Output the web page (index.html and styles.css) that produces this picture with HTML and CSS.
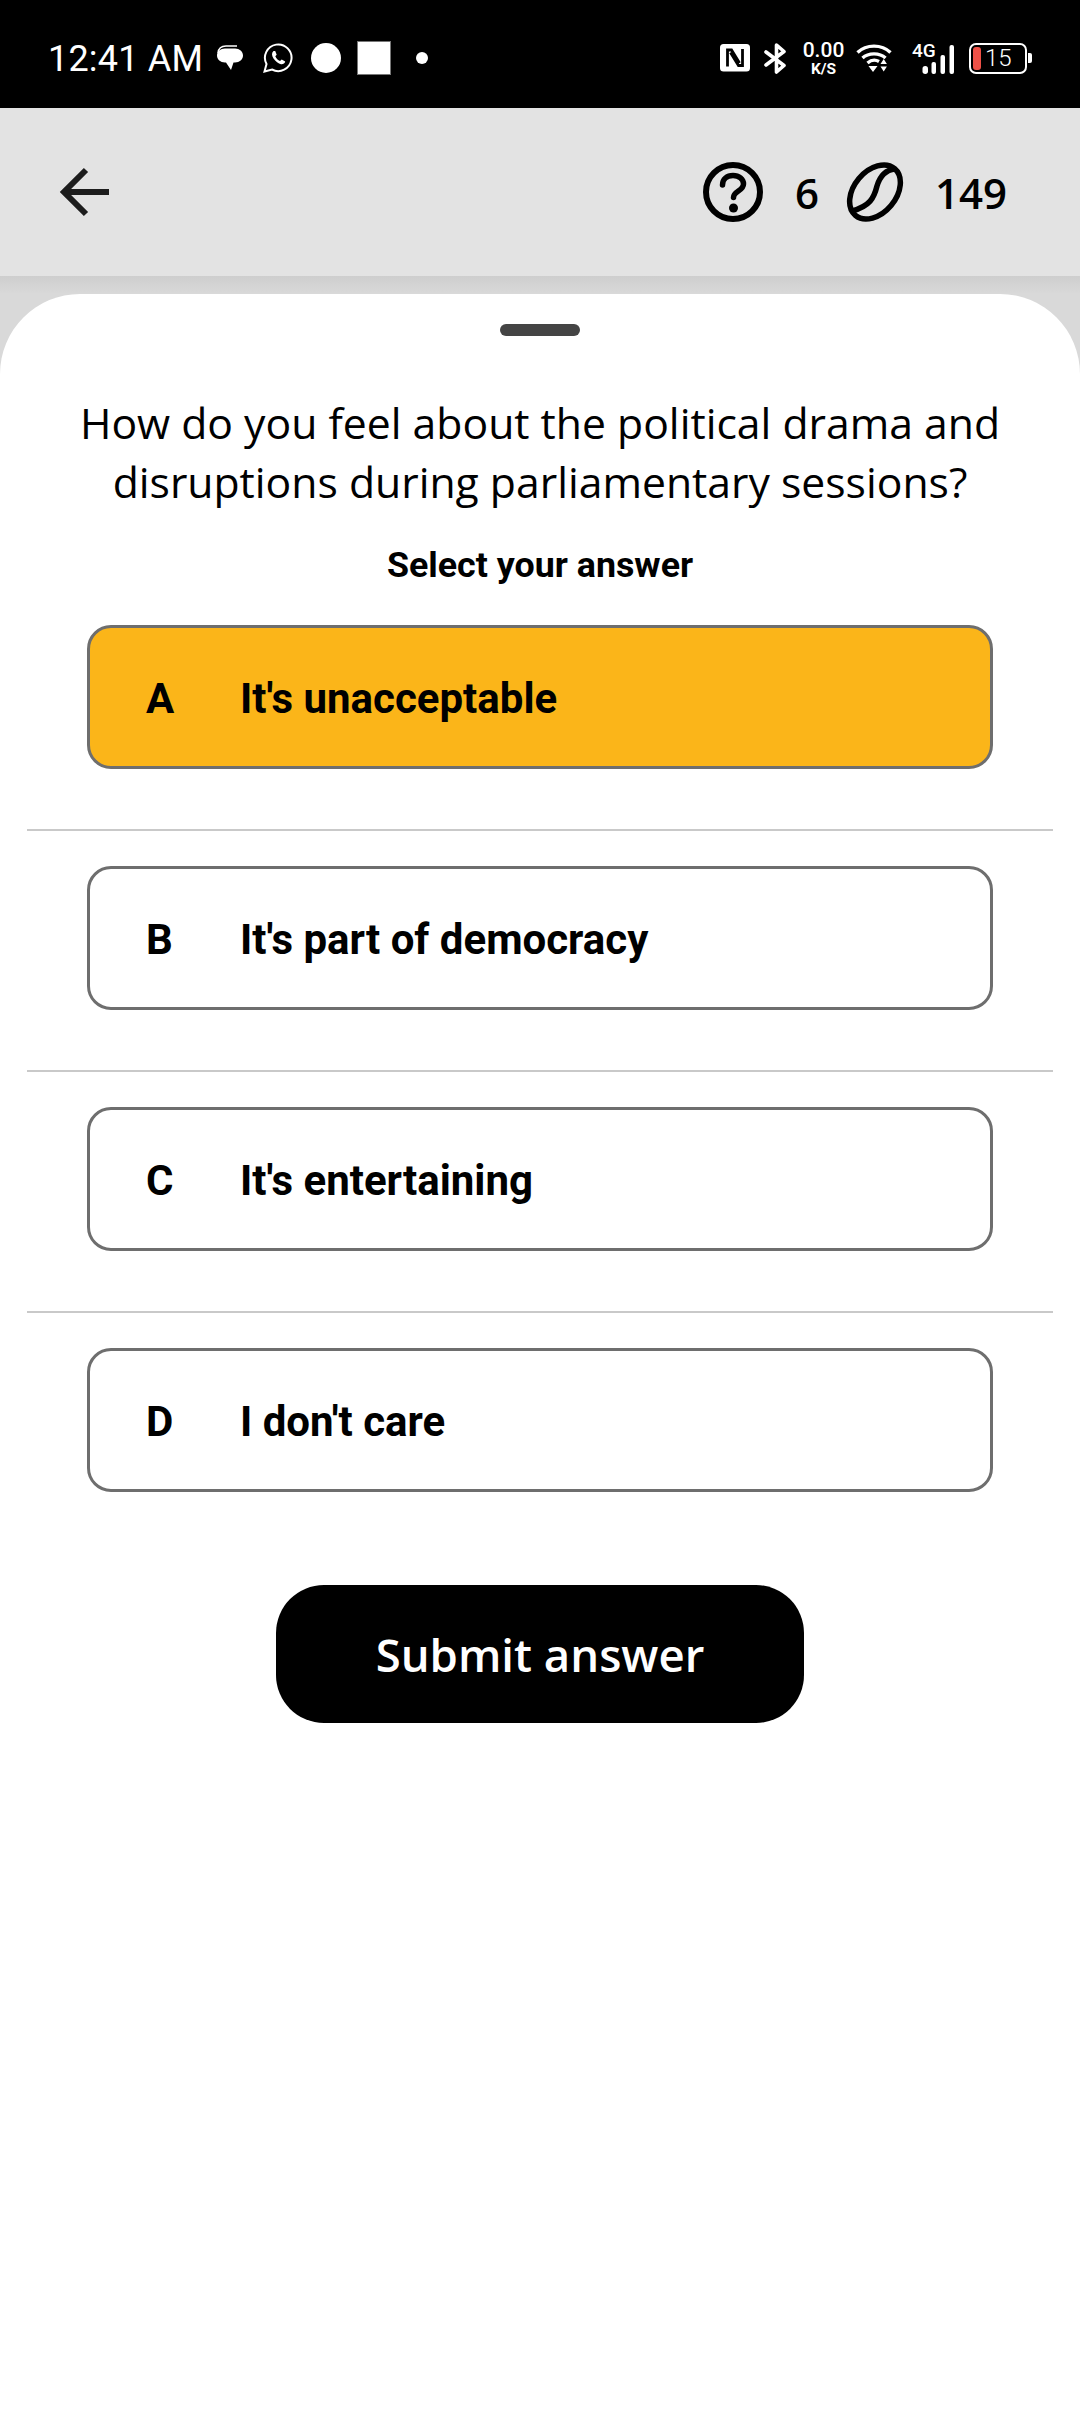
FILE: index.html
```html
<!doctype html>
<html lang="en">
  <head>
    <meta charset="UTF-8" />
    <meta name="viewport" content="width=device-width, initial-scale=1.0" />
    <title>Quiz question</title>
    <link rel="stylesheet" href="styles.css">
  </head>
  <body>
    <div class="status-bar">
      <div class="status-left">
        <span class="status-time">12:41 AM</span>
        <svg width="26" height="26" viewBox="0 0 26 26"><path d="M1 8C1.500 3.500 4.500 1 9 1h11" fill="none" stroke="#fff" stroke-width="1.500"/><path d="M8 3.500h10c4.500 0 8 3 8 7s-3.500 7-8 7h-1.500l-2.500 7.500-5-7.500H8c-4.500 0-8-3-8-7s3.500-7 8-7z" fill="#fff"/></svg>
        <svg class="st-whatsapp" width="30" height="30" viewBox="0 0 30 30"><path d="M1.500 28.500l2-7.500a13.300 13.300 0 1 1 5.500 5.500z" fill="none" stroke="#fff" stroke-width="2"/><path d="M10.500 8c-2 1.500-2 4.500 0 7.500 2 3 5 5.200 7.500 5.700 2 .3 3.800-.8 4.200-2.700l-3.500-2-1.700 1.500c-2-.8-3.800-2.500-4.700-4.700l1.400-1.500-1.500-3.800z" fill="#fff"/></svg>
        <span class="st-circle"></span>
        <span class="st-square"></span>
        <span class="st-dot"></span>
      </div>
      <div class="status-right">
        <svg width="30" height="28" viewBox="0 0 30 28"><rect width="30" height="27.500" rx="3.500" fill="#fff"/><path d="M7.500 22.500V6h4l8 13M22.500 5v16.500h-4l-8-13" fill="none" stroke="#000" stroke-width="2.800"/></svg>
        <svg class="st-bt" width="24" height="31" viewBox="0 0 24 31"><path d="M2 9l18 13.500-7.500 6.500V2l7.500 6.500L2 22" fill="none" stroke="#fff" stroke-width="3.600" stroke-linecap="round" stroke-linejoin="round"/></svg>
        <div class="st-speed"><span>0.00</span><span class="st-unit">K/S</span></div>
        <svg class="st-wifi" width="36" height="30" viewBox="0 0 36 30"><path d="M1.500 9.500c9-8.500 24-8.500 33 0M6.500 15c6-5.500 17-5.500 23 0M11.500 20c3.500-3 8-3.500 11.500-1.500" fill="none" stroke="#fff" stroke-width="3.400"/><path d="M12.500 23h9l-4.500 6zM24.500 21l3.200-5 3.200 5zM24.500 23.500h6.400l-3.200 5z" fill="#fff"/></svg>
        <div class="st-signal">
          <span class="st-4g">4G</span>
          <svg width="32" height="29" viewBox="0 0 32 29"><rect x="0.500" y="21" width="5.500" height="8" rx="2.700" fill="#fff"/><rect x="9.500" y="17" width="4.500" height="12" rx="2" fill="#fff"/><rect x="18.500" y="10" width="4.500" height="19" rx="2" fill="#fff"/><rect x="27.500" y="0" width="4.500" height="29" rx="2" fill="#fff"/></svg>
        </div>
        <div class="st-battery">
          <div class="st-battery-body"><span class="st-battery-fill"></span><span class="st-battery-num">15</span></div>
          <span class="st-battery-tip"></span>
        </div>
      </div>
    </div>

    <div class="top-bar">
      <svg width="50" height="50" viewBox="0 0 50 50"><path d="M50 25H4M27 3L5 25l22 22" fill="none" stroke="#1d1d1d" stroke-width="6"/></svg>
      <div class="top-stats">
        <svg width="60" height="60" viewBox="0 0 60 60"><circle cx="30" cy="30" r="27" fill="none" stroke="#000" stroke-width="6"/><path d="M19.500 23c0-6 4.500-9.500 10.500-9.500s10.500 3.500 10.500 8.500c0 7-10 7-10 13.500" fill="none" stroke="#000" stroke-width="5.500" stroke-linecap="round"/><circle cx="30.500" cy="46" r="4.500" fill="#000"/></svg>
        <span class="stat-num stat-questions">6</span>
        <svg width="60" height="60" viewBox="0 0 60 60"><g transform="rotate(40 30 30)"><ellipse cx="30" cy="30" rx="21" ry="30.500" fill="none" stroke="#000" stroke-width="5.500"/></g><path d="M50 7C40 8 35 14 32 24c-3 12-7 20-25 25" fill="none" stroke="#000" stroke-width="5.500"/></svg>
        <span class="stat-num">149</span>
      </div>
    </div>

    <div class="sheet-area">
      <div class="sheet">
        <div class="sheet-handle"></div>
        <p class="question">How do you feel about the political drama and disruptions during parliamentary sessions?</p>
        <p class="select-label">Select your answer</p>

        <div class="option-list">
          <div class="option-row">
            <div class="option option-selected"><span class="option-letter">A</span><span class="option-text">It's unacceptable</span></div>
          </div>
          <div class="option-row">
            <div class="option"><span class="option-letter">B</span><span class="option-text">It's part of democracy</span></div>
          </div>
          <div class="option-row">
            <div class="option"><span class="option-letter">C</span><span class="option-text">It's entertaining</span></div>
          </div>
          <div class="option-row">
            <div class="option"><span class="option-letter">D</span><span class="option-text">I don't care</span></div>
          </div>
        </div>

        <button class="submit-btn">Submit answer</button>
      </div>
    </div>
  </body>
</html>
```

FILE: styles.css
```css
body {
  margin: 0;
  width: 1080px;
  height: 2436px;
  overflow: hidden;
  background-color: #fff;
  font-family: "Open Sans", sans-serif;
  display: flex;
  flex-direction: column;
}

svg {
  display: block;
  flex-shrink: 0;
}

/* status bar */
.status-bar {
  height: 108px;
  background-color: #000;
  color: #fff;
  display: flex;
  justify-content: space-between;
  align-items: flex-start;
  padding: 40px 48px 0 48px;
  box-sizing: border-box;
}

.status-left,
.status-right {
  display: flex;
  align-items: center;
  height: 36px;
}

.status-time {
  font-family: Roboto, sans-serif;
  font-size: 36px;
  width: 169px;
  letter-spacing: 0.2px;
  padding-top: 2px;
}

.st-whatsapp {
  margin-left: 20px;
}

.st-circle {
  width: 30px;
  height: 30px;
  border-radius: 50%;
  background-color: #fff;
  margin-left: 18px;
}

.st-square {
  width: 34px;
  height: 34px;
  box-sizing: border-box;
  background-color: #fff;
  border: 1px solid #777;
  margin-left: 16px;
}

.st-dot {
  width: 12px;
  height: 12px;
  border-radius: 50%;
  background-color: #fff;
  margin-left: 25px;
}

.st-bt {
  margin-left: 14px;
}

.st-speed {
  font-family: Roboto, sans-serif;
  font-weight: 500;
  font-size: 21px;
  line-height: 21px;
  display: flex;
  flex-direction: column;
  align-items: center;
  margin-left: 16px;
  width: 39px;
}

.st-unit {
  font-size: 15.5px;
  line-height: 16px;
  font-weight: 700;
}

.st-wifi {
  margin-left: 13px;
}

.st-signal {
  display: flex;
  align-items: flex-end;
  margin-left: 20px;
  position: relative;
  width: 42px;
  height: 31px;
  justify-content: flex-end;
}

.st-4g {
  position: absolute;
  left: 0;
  top: -3px;
  font-family: Roboto, sans-serif;
  font-size: 19px;
  line-height: 22px;
  font-weight: 500;
}

.st-battery {
  display: flex;
  align-items: center;
  margin-left: 15px;
}

.st-battery-body {
  width: 58px;
  height: 31px;
  border: 2px solid #fff;
  border-radius: 7px;
  box-sizing: border-box;
  display: flex;
  align-items: center;
  padding-left: 2px;
  gap: 4px;
}

.st-battery-fill {
  width: 8px;
  height: 23px;
  border-radius: 3px;
  background-color: #ee5147;
}

.st-battery-num {
  font-family: Roboto, sans-serif;
  font-weight: 300;
  font-size: 24px;
}

.st-battery-tip {
  width: 4px;
  height: 10px;
  border-radius: 0 2px 2px 0;
  background-color: #fff;
  margin-left: 1px;
}

/* app bar */
.top-bar {
  height: 168px;
  background-color: #e3e3e3;
  display: flex;
  justify-content: space-between;
  align-items: center;
  padding: 0 73px 0 59px;
  box-sizing: border-box;
}

.top-stats {
  display: flex;
  align-items: center;
  gap: 30px;
}

.stat-num {
  font-size: 42px;
  font-weight: 600;
  color: #000;
}

.stat-questions {
  margin: 0 -4px 0 2px;
}

/* sheet */
.sheet-area {
  flex: 1;
  background: linear-gradient(#cecece, #d9d9d9 18px);
  padding-top: 18px;
}

.sheet {
  height: 100%;
  background-color: #fff;
  border-radius: 80px 80px 0 0;
  display: flex;
  flex-direction: column;
  align-items: center;
  padding-top: 30px;
  box-sizing: border-box;
}

.sheet-handle {
  width: 80px;
  height: 12px;
  border-radius: 6px;
  background-color: #444;
}

.question {
  margin: 57px 0 0;
  width: 960px;
  text-align: center;
  font-size: 42.7px;
  line-height: 59px;
  color: #000;
}

.select-label {
  margin: 32px 0 0;
  font-family: Roboto, sans-serif;
  font-weight: 700;
  font-size: 35.8px;
  line-height: 44px;
  color: #000;
}

.option-list {
  margin-top: 38px;
  width: 1026px;
  display: flex;
  flex-direction: column;
}

.option-row {
  padding: 0 60px 60px;
  border-bottom: 2px solid #c9c9c9;
}

.option-row + .option-row {
  padding-top: 35px;
}

.option-row:last-child {
  border-bottom: 0;
  padding-bottom: 0;
}

.option {
  height: 144px;
  box-sizing: border-box;
  border: 3px solid #6e6e6e;
  border-radius: 24px;
  padding-top: 3px;
  display: flex;
  align-items: center;
  background-color: #fff;
}

.option-selected {
  background-color: #fbb519;
}

.option-letter {
  width: 150px;
  padding-left: 56px;
  box-sizing: border-box;
  font-family: Roboto, sans-serif;
  font-weight: 700;
  font-size: 42px;
  color: #000;
}

.option-text {
  font-family: Roboto, sans-serif;
  font-weight: 700;
  font-size: 42px;
  color: #000;
}

.submit-btn {
  margin-top: 93px;
  width: 528px;
  height: 138px;
  border: 0;
  border-radius: 48px;
  background-color: #000;
  color: #fff;
  font-family: "Open Sans", sans-serif;
  font-weight: 600;
  font-size: 45.5px;
}
```
